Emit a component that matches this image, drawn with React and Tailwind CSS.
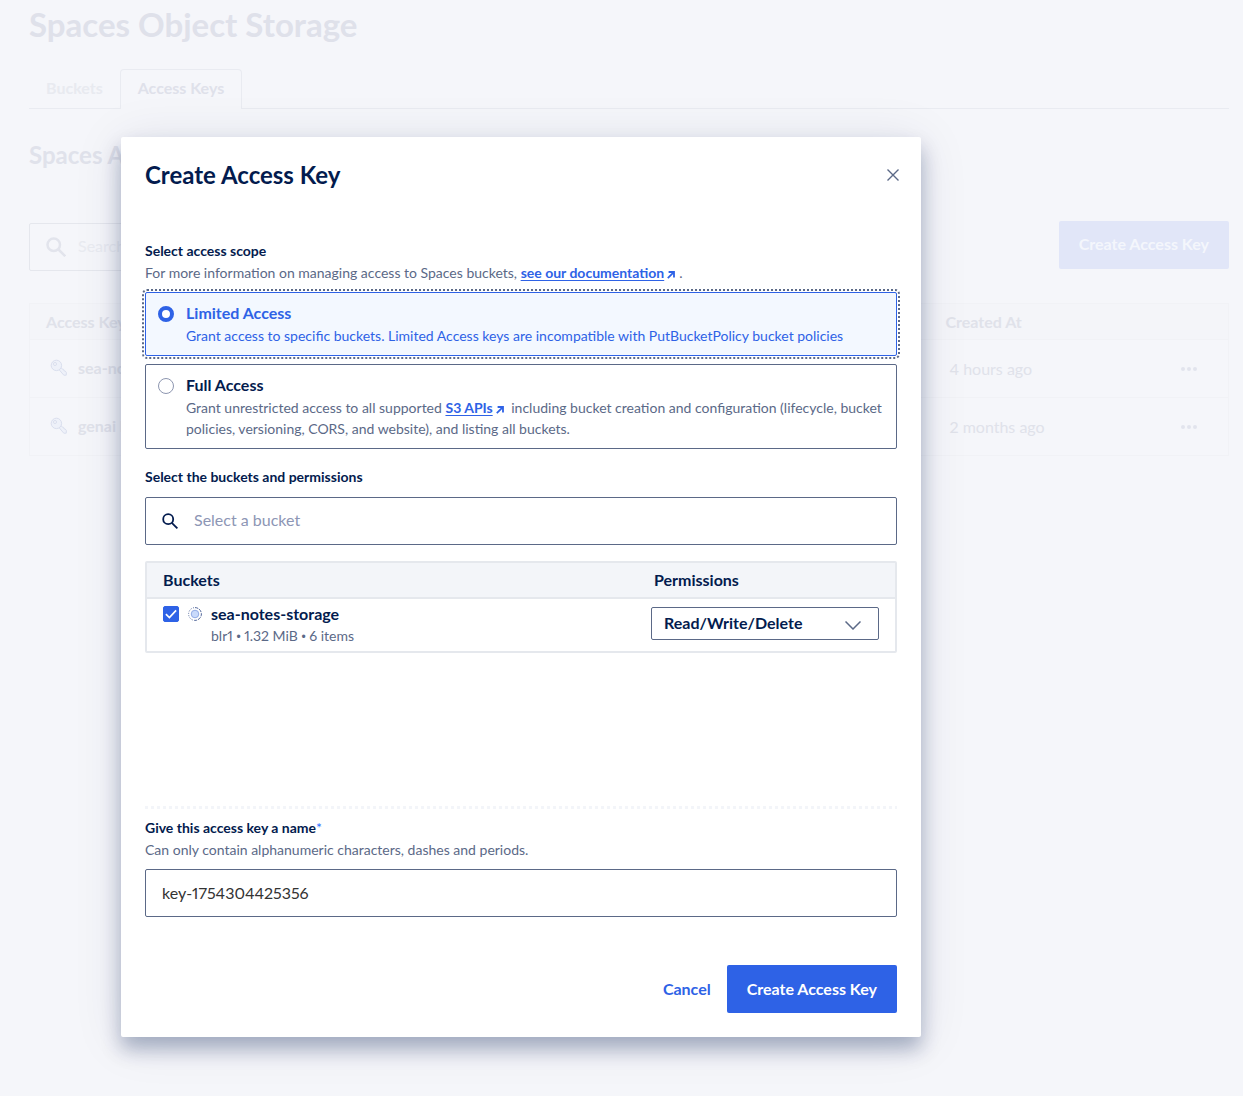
import React, { useState } from "react";

function SearchIcon({ className, width = 2 }) {
  return (
    <svg viewBox="0 0 16 16" className={className} fill="none" stroke="currentColor" strokeWidth={width} aria-hidden="true">
      <circle cx="6.2" cy="6.2" r="5" />
      <path d="M9.8 9.8 15.4 15.4" />
    </svg>
  );
}

function KeyIcon() {
  return (
    <svg viewBox="0 0 18 18" className="size-[18px] shrink-0" fill="#eef1f9" stroke="#dadfee" aria-hidden="true">
      <path d="M9 10.6 11 8.6 12.4 10.2 13.6 10.4 14 11.8 15.2 12 16.4 13.6 16.2 16.2 13.8 16.2Z" strokeLinejoin="round" />
      <circle cx="6.4" cy="6.4" r="5.2" />
      <circle cx="5" cy="5" r="1.5" fill="#f5f6fa" />
    </svg>
  );
}

function BucketIcon() {
  return (
    <svg viewBox="0 0 14 14" className="size-3.5 shrink-0" fill="none" aria-hidden="true">
      <circle cx="7" cy="7" r="3.8" fill="#c9dafb" stroke="#7f9ce0" strokeWidth=".8" />
      <path d="M7 .6a6.4 6.4 0 0 1 0 12.8" stroke="#3e568f" strokeWidth=".9" strokeDasharray="3.4 1" />
      <path d="M7 13.4A6.4 6.4 0 0 1 7 .6" stroke="#3e568f" strokeWidth=".9" strokeDasharray="1 1.5" />
    </svg>
  );
}

function ExternalArrow() {
  return (
    <svg viewBox="0 0 8 8" className="mt-0.5 mr-1 ml-[3px] inline-block size-2" fill="none" stroke="#2e62e6" strokeWidth="1.8" aria-hidden="true">
      <path d="M.8 7.2 6.6 1.4M1.6 1h5.4v5.4" />
    </svg>
  );
}

function DocLink({ children }) {
  return (
    <>
      <a href="#docs" className="font-bold text-[#2e62e6] underline underline-offset-2">{children}</a>
      <ExternalArrow />
    </>
  );
}

function Bullet() {
  return <span className="font-['Liberation_Sans',sans-serif] text-xs">•</span>;
}

function Dots() {
  return (
    <svg viewBox="0 0 16 4" className="h-1 w-4" fill="#e2e4ed" aria-hidden="true">
      <circle cx="2" cy="2" r="2" />
      <circle cx="8" cy="2" r="2" />
      <circle cx="14" cy="2" r="2" />
    </svg>
  );
}

const keys = [
  { name: "sea-notes-key", created: "4 hours ago" },
  { name: "genai key", created: "2 months ago" },
];

function StoragePage() {
  return (
    <main className="pr-3.5 pl-[29px]">
      <h1 className="pt-1 text-[33px] leading-10 font-bold text-[#dfe1ea]">Spaces Object Storage</h1>
      <nav className="mt-[25px] flex h-10 text-base leading-[22px] font-bold">
        <a href="#buckets" className="border-b border-[#e9ebf1] px-[17px] pt-2 text-[#e8eaf0]">Buckets</a>
        <a href="#keys" className="rounded-t-sm border border-b-0 border-[#e9ebf1] px-[17px] pt-[7px] text-[#dfe1ea]">Access Keys</a>
        <span className="grow border-b border-[#e9ebf1]" />
      </nav>
      <h2 className="mt-[30px] text-2xl leading-8 font-bold text-[#e0e2eb]">Spaces Access Keys</h2>
      <div className="mt-12 flex items-center justify-between gap-6">
        <div className="mt-1 flex h-12 w-[420px] items-center gap-3 rounded-xs border border-[#e5e7ed] px-4 text-[#e2e4ec]">
          <SearchIcon className="size-5 shrink-0" />
          <input type="search" aria-label="Search keys" placeholder="Search by key name" className="w-full pb-0.5 outline-none placeholder:text-[#e9ebf1]" />
        </div>
        <button className="h-12 rounded-xs bg-[#e1e6f8] px-5 pb-0.5 font-bold text-[#f4f6fc]">Create Access Key</button>
      </div>
      <table className="mt-8 w-full table-fixed border border-[#f1f2f6] text-left text-[#e0e2ea]">
        <thead>
          <tr className="h-9 border-b border-[#f1f2f6] bg-[#f4f5f9]">
            <th className="w-[900px] px-4 font-bold">Access Key</th>
            <th className="px-4 font-bold">Created At</th>
            <th className="w-16" aria-label="Actions" />
          </tr>
        </thead>
        <tbody>
          {keys.map((k) => (
            <tr key={k.name} className="h-[58px] border-b border-[#f1f2f6]">
              <td className="px-5">
                <div className="flex items-center gap-2.5 pb-0.5 font-bold"><KeyIcon />{k.name}</div>
              </td>
              <td className="px-5">{k.created}</td>
              <td className="pl-4">
                <button aria-label="More" className="flex"><Dots /></button>
              </td>
            </tr>
          ))}
        </tbody>
      </table>
    </main>
  );
}

function ScopeOption({ title, checked, onSelect, children }) {
  return (
    <label
      className={
        "flex gap-3 rounded-xs border px-3 py-[9px] " +
        (checked
          ? "border-[#2e62e6] bg-[#f3f8ff] text-[#2e62e6] outline-2 outline-offset-1 outline-dotted outline-[#5b6987]"
          : "border-[#5b6987] text-[#5b6987]")
      }
    >
      <input
        type="radio"
        name="scope"
        checked={checked}
        onChange={onSelect}
        className="mt-1 size-4 shrink-0 appearance-none rounded-full border border-[#8d96b0] bg-white outline-none checked:border-4 checked:border-[#2e62e6]"
      />
      <span className="block">
        <span className={"block text-base leading-[22px] font-bold " + (checked ? "" : "text-[#031b4e]")}>{title}</span>
        <span className="mt-px block text-sm leading-[21px]">{children}</span>
      </span>
    </label>
  );
}

function CreateKeyDialog() {
  const [scope, setScope] = useState("limited");
  const [name, setName] = useState("key-1754304425356");
  return (
    <section
      role="dialog"
      aria-labelledby="dialog-title"
      className="w-full max-w-[800px] rounded-xs bg-white p-6 text-[#031b4e] shadow-[0_12px_20px_rgba(3,27,78,0.3),0_4px_50px_rgba(3,27,78,0.1)]"
    >
      <header className="flex items-center justify-between">
        <h2 id="dialog-title" className="text-2xl leading-7 font-bold">Create Access Key</h2>
        <button aria-label="Close" className="-mr-1.5 p-1">
          <svg viewBox="0 0 12 12" className="size-3" fill="none" stroke="#5b6987" strokeWidth="1.4" aria-hidden="true">
            <path d="M.5.5l11 11M11.5.5l-11 11" />
          </svg>
        </button>
      </header>

      <h3 className="mt-[51px] text-sm leading-[22px] font-bold">Select access scope</h3>
      <p className="text-sm leading-[22px] text-[#5b6987]">
        For more information on managing access to Spaces buckets, <DocLink>see our documentation</DocLink>.
      </p>
      <div className="mt-2 flex flex-col gap-2">
        <ScopeOption title="Limited Access" checked={scope === "limited"} onSelect={() => setScope("limited")}>
          Grant access to specific buckets. Limited Access keys are incompatible with PutBucketPolicy bucket policies
        </ScopeOption>
        <ScopeOption title="Full Access" checked={scope === "full"} onSelect={() => setScope("full")}>
          Grant unrestricted access to all supported <DocLink>S3 APIs</DocLink> including bucket creation and
          configuration (lifecycle, bucket policies, versioning, CORS, and website), and listing all buckets.
        </ScopeOption>
      </div>

      <label htmlFor="bucket" className="mt-[17px] block text-sm leading-[22px] font-bold">Select the buckets and permissions</label>
      <div className="mt-[9px] flex h-12 items-center gap-4 rounded-xs border border-[#5b6987] px-4">
        <SearchIcon className="size-4 shrink-0" width={1.8} />
        <input id="bucket" placeholder="Select a bucket" className="w-full pb-0.5 outline-none placeholder:text-[#8d96b5]" />
      </div>

      <div className="mt-4 h-[245px]">
        <div className="rounded-xs border-2 border-[#e5e8ed]">
          <table className="w-full table-fixed text-left leading-[22px]">
            <thead>
              <tr className="h-[35px] border-b-2 border-[#e5e8ed] bg-[#f3f5f9]">
                <th className="px-4 font-bold">Buckets</th>
                <th className="w-[244px] font-bold">
                  <span className="pl-[3px]">Permissions</span>
                </th>
              </tr>
            </thead>
            <tbody>
              <tr className="h-[53px]">
                <td className="px-4 align-top">
                  <div className="flex items-start pt-1">
                    <span className="mt-[3px] grid size-4 shrink-0 place-items-center">
                      <input
                        id="sea"
                        type="checkbox"
                        defaultChecked
                        className="peer col-start-1 row-start-1 size-4 appearance-none rounded-xs border border-[#5b6987] checked:border-[#2e62e6] checked:bg-[#2e62e6]"
                      />
                      <svg viewBox="0 0 12 12" className="pointer-events-none col-start-1 row-start-1 size-3 opacity-0 peer-checked:opacity-100" fill="none" stroke="#fff" strokeWidth="1.7" aria-hidden="true">
                        <path d="M.9 6.2 4.4 9.5 11.1 2.3" />
                      </svg>
                    </span>
                    <span className="mt-1 ml-[9px]"><BucketIcon /></span>
                    <label htmlFor="sea" className="ml-[9px]">
                      <span className="block leading-[22px] font-bold">sea-notes-storage</span>
                      <span className="block text-sm leading-[22px] text-[#5b6987]">blr1 <Bullet /> 1.32 MiB <Bullet /> 6 items</span>
                    </label>
                  </div>
                </td>
                <td className="pt-2 pr-4 align-top">
                  <div className="grid items-center">
                    <select aria-label="Permissions" className="col-start-1 row-start-1 h-[33px] w-full appearance-none rounded-xs border border-[#5b6987] bg-white px-3 pb-0.5 font-bold">
                      <option>Read/Write/Delete</option>
                      <option>Read</option>
                    </select>
                    <svg viewBox="0 0 16 9" className="pointer-events-none col-start-1 row-start-1 mt-1 mr-[18px] h-[9px] w-4 justify-self-end" fill="none" stroke="#5b6987" strokeWidth="1.5" aria-hidden="true">
                      <path d="M.5.5 8 8 15.5.5" />
                    </svg>
                  </div>
                </td>
              </tr>
            </tbody>
          </table>
        </div>
      </div>

      <div className="h-[3px] bg-[repeating-linear-gradient(90deg,#f3f5f9_0_3px,#ffffff_3px_6px)]" />

      <label htmlFor="key-name" className="mt-2 block text-sm leading-[22px] font-bold">
        Give this access key a name<span className="font-normal text-[#2e72ff]">*</span>
      </label>
      <p className="text-sm leading-[22px] text-[#5b6987]">Can only contain alphanumeric characters, dashes and periods.</p>
      <input
        id="key-name"
        value={name}
        onChange={(e) => setName(e.target.value)}
        className="mt-2 block h-12 w-full rounded-xs border border-[#5b6987] px-4 pb-0.5 text-[#333333] proportional-nums"
      />

      <footer className="mt-12 flex items-center justify-end gap-4">
        <button className="font-bold text-[#2e62e6]">Cancel</button>
        <button className="h-12 rounded-xs bg-[#2e62e6] px-5 font-bold text-white">Create Access Key</button>
      </footer>
    </section>
  );
}

export default function App() {
  return (
    <div className="grid min-h-screen bg-[#f5f6fa] font-['Lato',sans-serif] proportional-nums">
      <div className="col-start-1 row-start-1">
        <StoragePage />
      </div>
      <div className="z-10 col-start-1 row-start-1 pt-[137px] pb-[59px] pl-[121px]">
        <CreateKeyDialog />
      </div>
    </div>
  );
}
